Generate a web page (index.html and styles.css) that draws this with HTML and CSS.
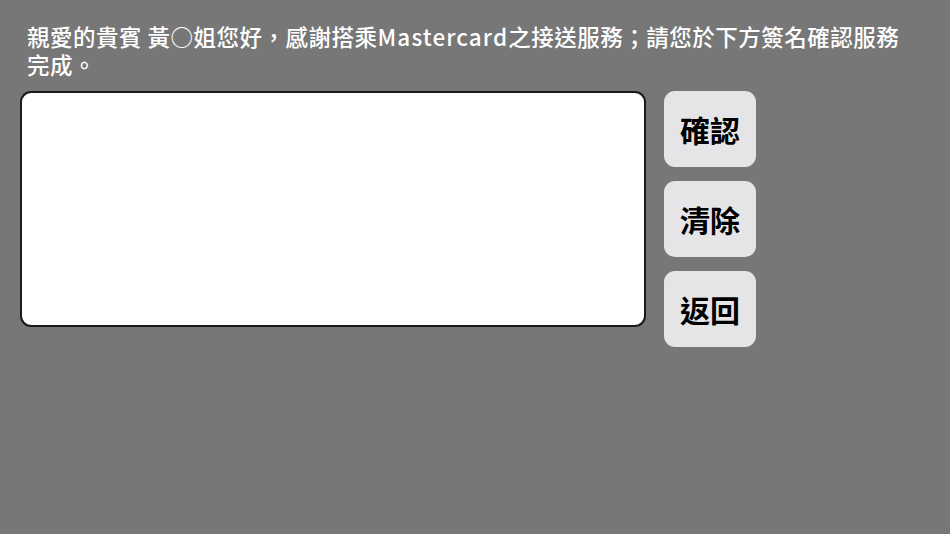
FILE: index.html
```html
<!DOCTYPE html>
<html lang="zh-Hant">
<head>
<meta charset="utf-8">
<link rel="stylesheet" href="styles.css">
</head>
<body>
<div class="page">
  <p class="title">親愛的貴賓 黃○姐您好，感謝搭乘<span class="latin">Mastercard</span>之接送服務；請您於下方簽名確認服務完成。</p>
  <div class="main">
    <div class="pad"></div>
    <div class="actions">
      <button class="btn">確認</button>
      <button class="btn">清除</button>
      <button class="btn">返回</button>
    </div>
  </div>
</div>
</body>
</html>
```
FILE: styles.css
```css
html, body {
  margin: 0;
  padding: 0;
  background: #777777;
  height: 100%;
}
body {
  font-family: "Noto Sans CJK TC", "Noto Sans", sans-serif;
}
.page {
  padding: 22px 0 0 20px;
}
.title {
  margin: 0 0 13px 0;
  padding-left: 7px;
  width: 884px;
  color: #ffffff;
  font-size: 22.5px;
  font-weight: 500;
  line-height: 28px;
  letter-spacing: 0.5px;
}
.latin {
  letter-spacing: 1.1px;
}
.main {
  display: flex;
  gap: 18px;
  align-items: flex-start;
}
.pad {
  width: 622px;
  height: 232px;
  background: #ffffff;
  border: 2px solid #1a1a1a;
  border-radius: 11px;
}
.actions {
  display: flex;
  flex-direction: column;
  gap: 14px;
}
.btn {
  width: 92px;
  height: 76px;
  border: none;
  border-radius: 11px;
  background: #e5e5e7;
  color: #000000;
  font-family: "Noto Sans CJK TC", sans-serif;
  font-size: 30px;
  font-weight: 700;
  padding: 0;
}
```
